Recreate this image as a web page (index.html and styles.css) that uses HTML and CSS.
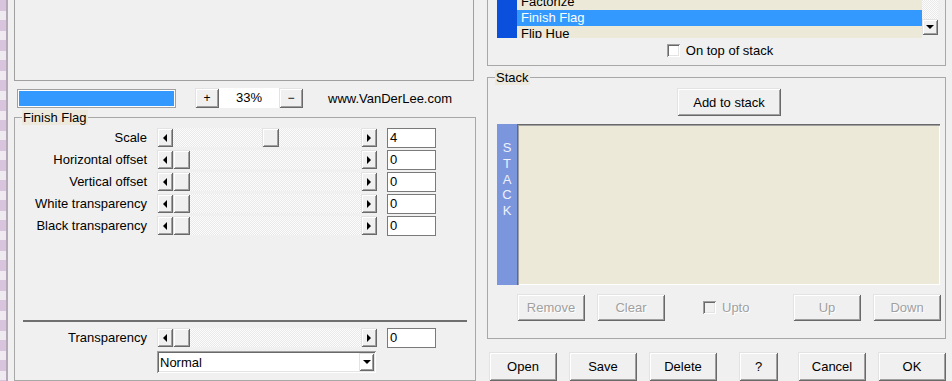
FILE: index.html
```html
<!DOCTYPE html>
<html>
<head>
    <meta charset="UTF-8">
    <title>Finish Flag</title>
    <link rel="stylesheet" href="styles.css">
</head>
<body>
    <div class="edge"></div>

    <div class="left">
        <div class="preview"></div>

        <div class="zoom-row">
            <div class="progress"><div class="progress-fill"></div></div>
            <div class="btn zoom-btn plus">+</div>
            <div class="zoom-value">33%</div>
            <div class="btn zoom-btn">&minus;</div>
            <div class="site">www.VanDerLee.com</div>
        </div>

        <div class="group filter-group">
            <span class="group-title">Finish Flag</span>
            <div class="params">
                <label>Scale</label>
                <div class="scroll">
                    <div class="sb-btn"><i class="arrow-left"></i></div>
                    <div class="track"><div class="thumb" style="margin-left:89px"></div></div>
                    <div class="sb-btn"><i class="arrow-right"></i></div>
                </div>
                <div class="edit">4</div>

                <label>Horizontal offset</label>
                <div class="scroll">
                    <div class="sb-btn"><i class="arrow-left"></i></div>
                    <div class="track"><div class="thumb"></div></div>
                    <div class="sb-btn"><i class="arrow-right"></i></div>
                </div>
                <div class="edit">0</div>

                <label>Vertical offset</label>
                <div class="scroll">
                    <div class="sb-btn"><i class="arrow-left"></i></div>
                    <div class="track"><div class="thumb"></div></div>
                    <div class="sb-btn"><i class="arrow-right"></i></div>
                </div>
                <div class="edit">0</div>

                <label>White transparency</label>
                <div class="scroll">
                    <div class="sb-btn"><i class="arrow-left"></i></div>
                    <div class="track"><div class="thumb"></div></div>
                    <div class="sb-btn"><i class="arrow-right"></i></div>
                </div>
                <div class="edit">0</div>

                <label>Black transparency</label>
                <div class="scroll">
                    <div class="sb-btn"><i class="arrow-left"></i></div>
                    <div class="track"><div class="thumb"></div></div>
                    <div class="sb-btn"><i class="arrow-right"></i></div>
                </div>
                <div class="edit">0</div>
            </div>

            <div class="separator"></div>

            <div class="params transparency">
                <label>Transparency</label>
                <div class="scroll">
                    <div class="sb-btn"><i class="arrow-left"></i></div>
                    <div class="track"><div class="thumb"></div></div>
                    <div class="sb-btn"><i class="arrow-right"></i></div>
                </div>
                <div class="edit">0</div>
            </div>

            <div class="combo">
                <span>Normal</span>
                <div class="combo-btn"><i class="arrow-down"></i></div>
            </div>
        </div>
    </div>

    <div class="right">
        <div class="group list-group">
            <div class="list-frame">
                <div class="list-bar"></div>
                <div class="list">
                    <div class="list-items">
                        <div class="item">Factorize</div>
                        <div class="item selected">Finish Flag</div>
                        <div class="item">Flip Hue</div>
                    </div>
                </div>
                <div class="vscroll">
                    <div class="vtrack"></div>
                    <div class="sb-btn down"><i class="arrow-down"></i></div>
                </div>
            </div>
            <div class="check-row top-check"><span class="check"></span>On top of stack</div>
        </div>

        <div class="group stack-group">
            <span class="group-title">Stack</span>
            <div class="btn add-btn">Add to stack</div>
            <div class="stack-panel">
                <div class="stack-bar">S<br>T<br>A<br>C<br>K</div>
                <div class="stack-list"></div>
            </div>
            <div class="stack-actions">
                <div class="btn action disabled">Remove</div>
                <div class="btn action disabled clear">Clear</div>
                <div class="check-row upto disabled"><span class="check"></span>Upto</div>
                <div class="btn action disabled up">Up</div>
                <div class="btn action disabled down-btn">Down</div>
            </div>
        </div>

        <div class="dialog-buttons">
            <div class="btn action">Open</div>
            <div class="btn action gap">Save</div>
            <div class="btn action gap">Delete</div>
            <div class="btn help">?</div>
            <div class="btn action cancel">Cancel</div>
            <div class="btn action gap">OK</div>
        </div>
    </div>
</body>
</html>
```

FILE: styles.css
```css
* {
    box-sizing: border-box;
}
body {
    margin: 0;
    width: 952px;
    height: 381px;
    overflow: hidden;
    display: flex;
    align-items: flex-start;
    background-color: #f0f0f0;
    font-family: "Liberation Sans", Arial, sans-serif;
    font-size: 13px;
    color: #000;
}

/* window edge on the left */
.edge {
    flex: none;
    width: 8px;
    height: 381px;
    border-right: 2px solid #b4a8b8;
    background: repeating-linear-gradient(to bottom, #d9c4dd 0 11px, #efe9f0 11px 20px);
}

/* shared widgets */
.btn {
    display: flex;
    align-items: center;
    justify-content: center;
    background-color: #f0f0f0;
    box-shadow: inset 1px 1px #e3e3e3, inset -1px -1px #696969, inset 2px 2px #fff, inset -2px -2px #a0a0a0;
}
.btn.disabled {
    color: #a0a0a0;
    text-shadow: 1px 1px #fff;
}
.group {
    position: relative;
    border: 1px solid #a8a8a8;
}
.group-title {
    position: absolute;
    top: -8px;
    left: 7px;
    padding: 0 1px;
    line-height: 15px;
    background-color: #ede9dd;
}
.sb-btn {
    flex: none;
    width: 16px;
    display: flex;
    align-items: center;
    justify-content: center;
    background-color: #f0f0f0;
    box-shadow: inset 1px 1px #e3e3e3, inset -1px -1px #696969, inset 2px 2px #fff, inset -2px -2px #a0a0a0;
}
.arrow-left, .arrow-right, .arrow-down {
    width: 0;
    height: 0;
}
.arrow-left {
    border-top: 4px solid transparent;
    border-bottom: 4px solid transparent;
    border-right: 4px solid #000;
}
.arrow-right {
    border-top: 4px solid transparent;
    border-bottom: 4px solid transparent;
    border-left: 4px solid #000;
}
.arrow-down {
    border-left: 4px solid transparent;
    border-right: 4px solid transparent;
    border-top: 4px solid #000;
}
.check {
    flex: none;
    width: 13px;
    height: 13px;
    margin-right: 6px;
    background-color: #fff;
    box-shadow: inset 1px 1px #a0a0a0, inset -1px -1px #fff, inset 2px 2px #696969, inset -2px -2px #e3e3e3;
}

/* left column */
.left {
    flex: none;
    width: 462px;
    margin-left: 6px;
}
.preview {
    width: 460px;
    height: 82px;
    margin-top: -1px;
    border: 1px solid #a0a0a0;
}
.zoom-row {
    display: flex;
    align-items: center;
    height: 20px;
    margin-top: 7px;
}
.progress {
    width: 159px;
    height: 19px;
    margin-left: 3px;
    padding: 1px;
    border: 1px solid #a0a0a0;
    background-color: #fff;
}
.progress-fill {
    height: 100%;
    background-color: #3399ff;
}
.zoom-btn {
    width: 24px;
    height: 20px;
    font-size: 12px;
}
.zoom-btn.plus {
    margin-left: 19px;
}
.zoom-value {
    width: 60px;
    height: 20px;
    line-height: 20px;
    text-align: center;
    background-color: #fff;
}
.site {
    margin-left: 25px;
}

.filter-group {
    width: 462px;
    height: 264px;
    margin-top: 9px;
    padding-top: 10px;
}
.params {
    display: grid;
    grid-template-columns: 132px 220px 49px;
    grid-auto-rows: 19px;
    column-gap: 10px;
    row-gap: 3px;
}
.params label {
    line-height: 19px;
    text-align: right;
    white-space: nowrap;
}
.scroll {
    display: flex;
    height: 19px;
}
.track {
    flex: 1;
    display: flex;
    background: repeating-conic-gradient(#fcfcfc 0 25%, #e9e9e9 0 50%) 0 0 / 2px 2px;
}
.thumb {
    width: 17px;
    background-color: #f0f0f0;
    box-shadow: inset 1px 1px #e3e3e3, inset -1px -1px #696969, inset 2px 2px #fff, inset -2px -2px #a0a0a0;
}
.edit {
    height: 20px;
    padding-left: 2px;
    line-height: 18px;
    border: 1px solid #7a7a7a;
    background-color: #fff;
}
.separator {
    height: 2px;
    margin: 85px 8px 0 8px;
    background-color: #6f6f6f;
}
.params.transparency {
    margin-top: 6px;
}
.combo {
    display: flex;
    align-items: center;
    width: 219px;
    height: 22px;
    margin: 4px 0 0 142px;
    padding: 2px;
    background-color: #fff;
    box-shadow: inset 1px 1px #a0a0a0, inset -1px -1px #fff, inset 2px 2px #696969, inset -2px -2px #e3e3e3;
}
.combo span {
    padding-left: 1px;
}
.combo-btn {
    width: 15px;
    height: 18px;
    margin-left: auto;
    display: flex;
    align-items: center;
    justify-content: center;
    box-shadow: inset 1px 1px #e3e3e3, inset -1px -1px #696969, inset 2px 2px #fff, inset -2px -2px #a0a0a0;
}

/* right column */
.right {
    flex: none;
    width: 459px;
    margin-left: 11px;
}
.list-group {
    height: 67px;
    margin-top: -1px;
}
.list-frame {
    display: flex;
    height: 38px;
    margin-left: 9px;
}
.list-bar {
    width: 20px;
    background-color: #0a50dc;
}
.list {
    width: 405px;
    overflow: hidden;
    background-color: #ece9d8;
}
.list-items {
    margin-top: -6px;
}
.item {
    height: 16px;
    line-height: 16px;
    padding-left: 4px;
    white-space: nowrap;
}
.item.selected {
    background-color: #3399ff;
    color: #fff;
}
.vscroll {
    display: flex;
    flex-direction: column;
    width: 16px;
}
.vtrack {
    height: 19px;
    background: repeating-conic-gradient(#fcfcfc 0 25%, #e9e9e9 0 50%) 0 0 / 2px 2px;
}
.sb-btn.down {
    height: 16px;
}
.check-row {
    display: flex;
    align-items: center;
    height: 13px;
    white-space: nowrap;
}
.top-check {
    justify-content: center;
    margin-top: 6px;
    padding-left: 7px;
}

.stack-group {
    height: 262px;
    margin-top: 11px;
}
.add-btn {
    width: 104px;
    height: 28px;
    margin: 10px 0 0 189px;
}
.stack-panel {
    display: flex;
    width: 443px;
    height: 161px;
    margin: 8px 0 0 9px;
}
.stack-bar {
    width: 20px;
    padding-top: 16px;
    line-height: 15.75px;
    text-align: center;
    color: #eef2ff;
    background-color: #7b96dd;
}
.stack-list {
    flex: 1;
    background-color: #ece9d8;
    box-shadow: inset 1px 1px #696969, inset 2px 2px #a0a0a0, inset -1px -1px #fff;
}
.stack-actions {
    display: flex;
    align-items: center;
    height: 27px;
    margin-top: 9px;
    padding: 0 4px 0 29px;
}
.action {
    flex: none;
    width: 68px;
    height: 27px;
}
.stack-actions .clear {
    margin-left: 12px;
}
.upto {
    margin-left: 38px;
    color: #a0a0a0;
    text-shadow: 1px 1px #fff;
}
.upto .check {
    background-color: #f0f0f0;
}
.stack-actions .up {
    margin-left: auto;
}
.stack-actions .down-btn {
    margin-left: 12px;
}

.dialog-buttons {
    display: flex;
    margin: 13px 0 0 2px;
}
.dialog-buttons .action {
    height: 29px;
}
.dialog-buttons .gap {
    margin-left: 12px;
}
.help {
    width: 40px;
    height: 29px;
    margin-left: 22px;
}
.dialog-buttons .cancel {
    margin-left: 20px;
}
```
